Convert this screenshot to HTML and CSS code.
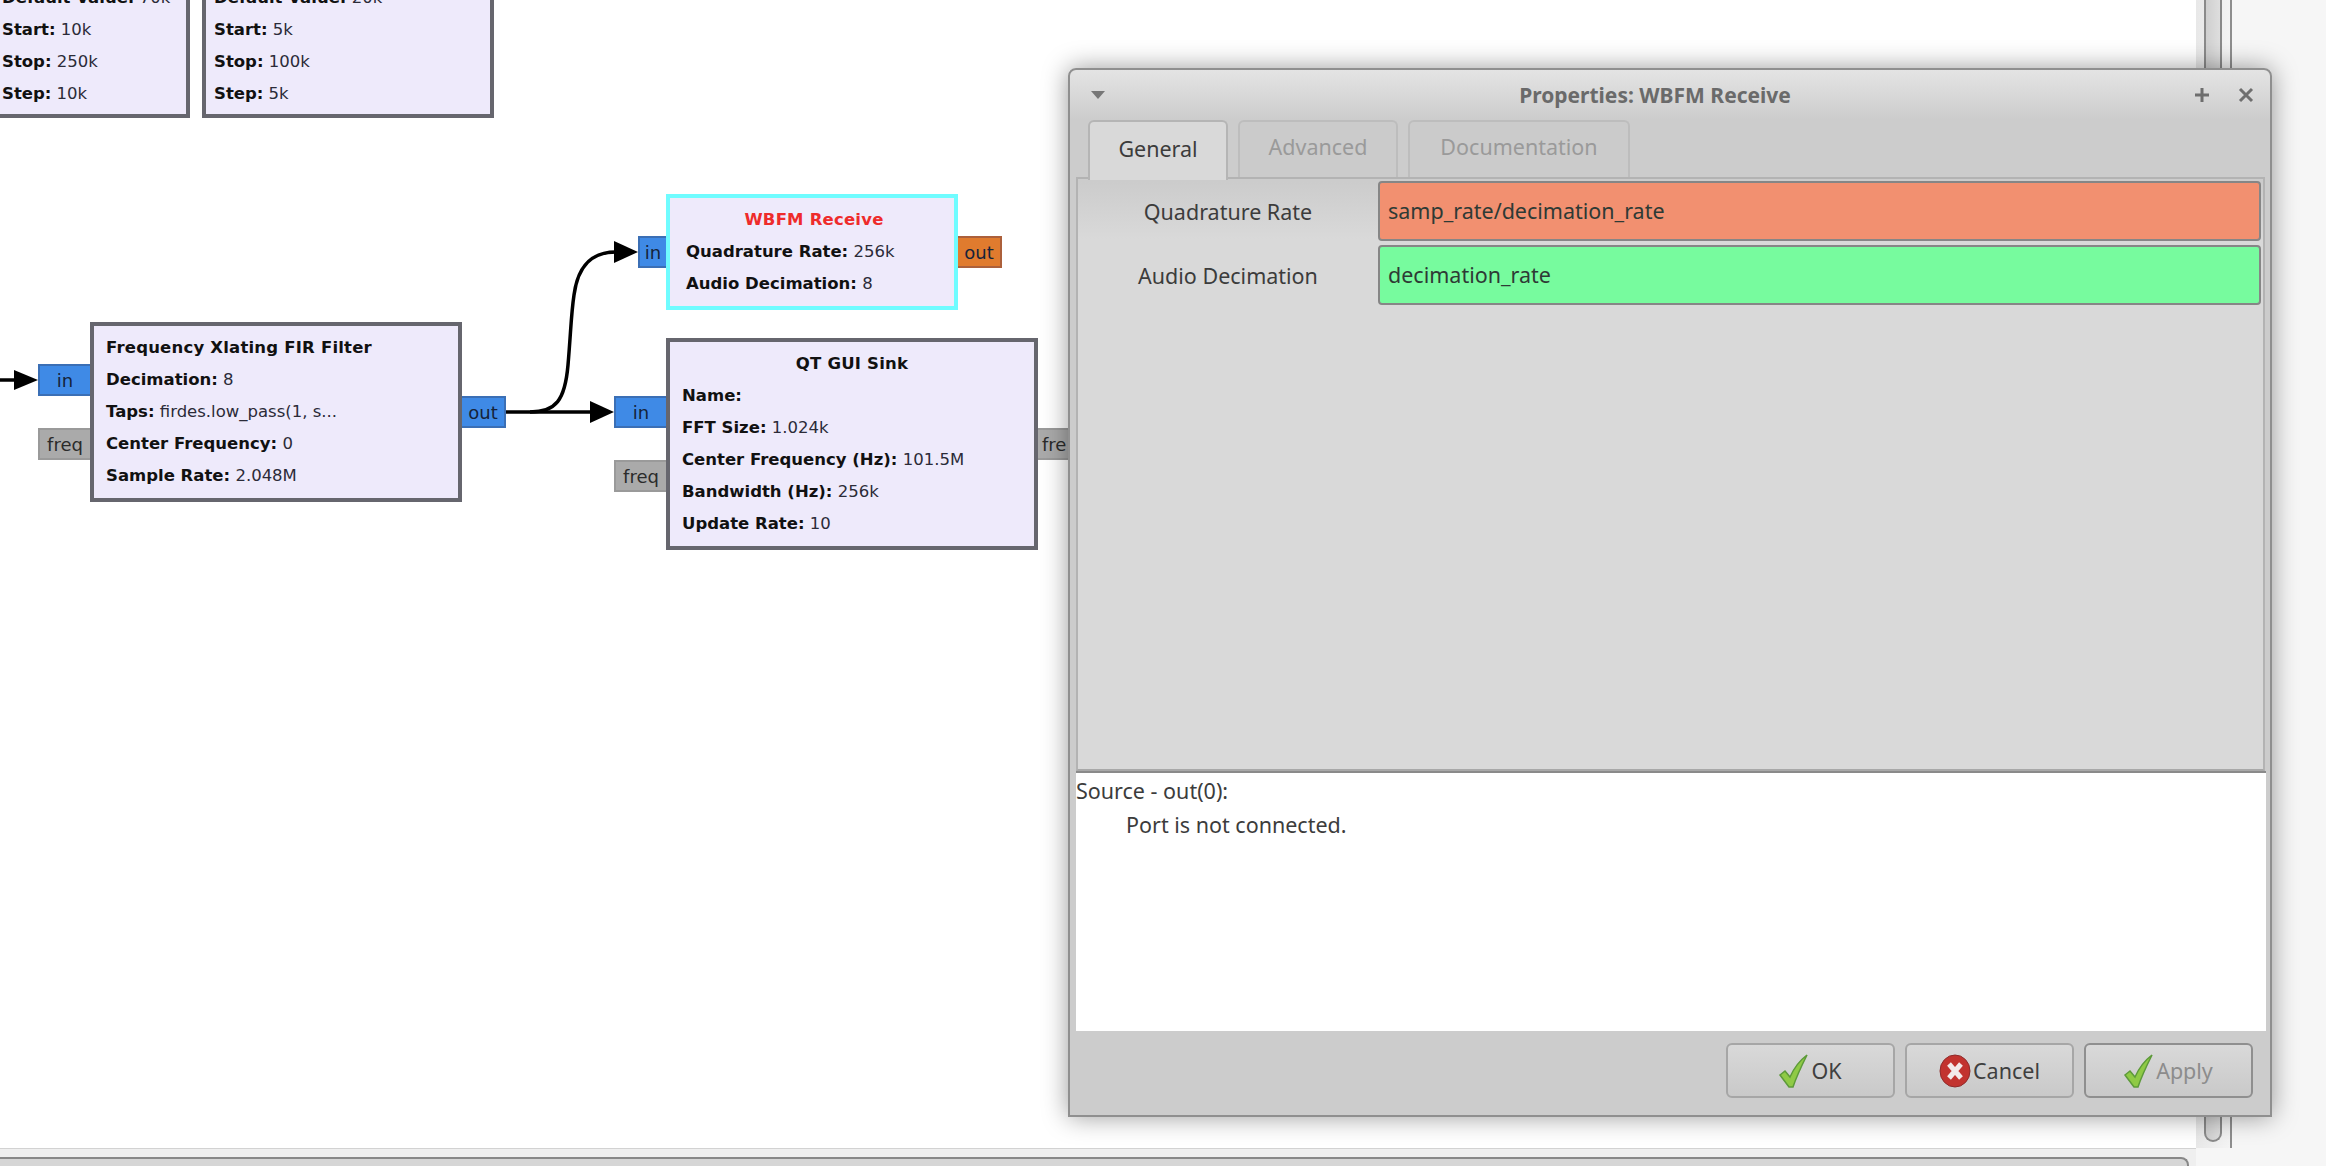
FILE: index.html
```html
<!DOCTYPE html>
<html lang="en">
<head>
  <meta charset="UTF-8">
  <meta name="viewport" content="width=device-width, initial-scale=1.0">
  <title>Properties: WBFM Receive</title>
  <link rel="stylesheet" href="styles.css">
</head>
<body>
  <div class="app">
    <div class="workspace">
      <div class="canvas">
        <div class="block block-a">
          <p class="param"><b>Default Value:</b> 70k</p>
          <p class="param"><b>Start:</b> 10k</p>
          <p class="param"><b>Stop:</b> 250k</p>
          <p class="param"><b>Step:</b> 10k</p>
        </div>
        <div class="block block-b">
          <p class="param"><b>Default Value:</b> 20k</p>
          <p class="param"><b>Start:</b> 5k</p>
          <p class="param"><b>Stop:</b> 100k</p>
          <p class="param"><b>Step:</b> 5k</p>
        </div>

        <svg class="wires" width="1040" height="560" viewBox="0 0 1040 560">
          <path class="wire" d="M0 380 H16"/>
          <path class="head" d="M14 370 L38 380 L14 390 Z"/>
          <path class="wire" d="M506 412 H592"/>
          <path class="head" d="M590 401 L614 412 L590 423 Z"/>
          <path class="wire" d="M530 412 C556 412 565 400 568 365 C571 330 571 315 574 295 C578 265 592 252 616 252"/>
          <path class="head" d="M614 241 L638 252 L614 263 Z"/>
        </svg>

        <div class="port port-in xlate-in">in</div>
        <div class="port port-msg xlate-freq">freq</div>
        <div class="block xlate">
          <p class="name">Frequency Xlating FIR Filter</p>
          <p class="param"><b>Decimation:</b> 8</p>
          <p class="param"><b>Taps:</b> firdes.low_pass(1, s...</p>
          <p class="param"><b>Center Frequency:</b> 0</p>
          <p class="param"><b>Sample Rate:</b> 2.048M</p>
        </div>
        <div class="port port-in xlate-out">out</div>

        <div class="port port-in wbfm-in">in</div>
        <div class="block wbfm">
          <p class="name name-center name-error">WBFM Receive</p>
          <p class="param"><b>Quadrature Rate:</b> 256k</p>
          <p class="param"><b>Audio Decimation:</b> 8</p>
        </div>
        <div class="port port-out wbfm-out">out</div>

        <div class="port port-in sink-in">in</div>
        <div class="port port-msg sink-freq">freq</div>
        <div class="block sink">
          <p class="name name-center">QT GUI Sink</p>
          <p class="param"><b>Name:</b></p>
          <p class="param"><b>FFT Size:</b> 1.024k</p>
          <p class="param"><b>Center Frequency (Hz):</b> 101.5M</p>
          <p class="param"><b>Bandwidth (Hz):</b> 256k</p>
          <p class="param"><b>Update Rate:</b> 10</p>
        </div>
        <div class="port port-msg sink-fre">fre</div>
      </div>
      <div class="vscroll"><div class="vthumb"></div></div>
      <div class="outside"></div>
    </div>
    <div class="hscroll"><div class="hpanel"></div></div>

    <div class="dialog">
      <div class="titlebar">
        <svg class="menu-arrow" width="14" height="8" viewBox="0 0 14 8"><path d="M0 0 H14 L7 8 Z"/></svg>
        <span class="title">Properties: WBFM Receive</span>
        <svg class="wm-btn wm-max" width="18" height="18" viewBox="0 0 18 18"><path d="M9 2 V16 M2 9 H16"/></svg>
        <svg class="wm-btn" width="18" height="18" viewBox="0 0 18 18"><path d="M3 3 L15 15 M15 3 L3 15"/></svg>
      </div>
      <div class="tabs">
        <div class="tab tab-active">General</div>
        <div class="tab tab-adv">Advanced</div>
        <div class="tab tab-doc">Documentation</div>
      </div>
      <div class="pane">
        <div class="prop-row">
          <label class="prop-label">Quadrature Rate</label>
          <div class="entry entry-bad">samp_rate/decimation_rate</div>
        </div>
        <div class="prop-row">
          <label class="prop-label">Audio Decimation</label>
          <div class="entry entry-good">decimation_rate</div>
        </div>
      </div>
      <div class="errors">
        <p>Source - out(0):</p>
        <p class="indent">Port is not connected.</p>
      </div>
      <div class="actions">
        <button class="btn">
          <svg class="icon" width="30" height="34" viewBox="0 0 30 34"><path class="check" d="M1 21 L6 17 L11 23 C15 14 20 7 28 1 C23 11 18 21 14 33 L10 33 Z"/></svg>
          OK
        </button>
        <button class="btn">
          <svg class="icon" width="32" height="34" viewBox="0 0 32 34"><ellipse class="stop" cx="16" cy="17" rx="15" ry="16"/><path class="stop-x" d="M10 10 L22 24 M22 10 L10 24"/></svg>
          Cancel
        </button>
        <button class="btn btn-dim">
          <svg class="icon" width="30" height="34" viewBox="0 0 30 34"><path class="check" d="M1 21 L6 17 L11 23 C15 14 20 7 28 1 C23 11 18 21 14 33 L10 33 Z"/></svg>
          Apply
        </button>
      </div>
    </div>
  </div>
</body>
</html>
```

FILE: styles.css
```css
* {
  box-sizing: border-box;
}
html, body {
  margin: 0;
  height: 100%;
  overflow: hidden;
}
p {
  margin: 0;
}
.app {
  position: relative;
  display: flex;
  flex-direction: column;
  width: 2326px;
  height: 1166px;
  background: #f6f6f6;
}
.workspace {
  display: flex;
  height: 1148px;
}
.canvas {
  position: relative;
  width: 2196px;
  background: #fff;
  overflow: hidden;
}
.vscroll {
  width: 36px;
  padding-left: 8px;
  border-right: 2px solid #8e8e8e;
  background: linear-gradient(to right, #e8e8e8, #f4f4f4);
}
.vthumb {
  width: 18px;
  height: 1142px;
  border: 2px solid #8a8a8a;
  border-top: none;
  border-radius: 0 0 9px 9px;
  background: linear-gradient(to right, #cfcfcf, #dedede);
}
.outside {
  flex: 1;
}
.hscroll {
  width: 2196px;
  height: 18px;
  padding-top: 8px;
  border-top: 1px solid #d2d2d2;
  background: #efefef;
}
.hpanel {
  height: 10px;
  border-top: 2px solid #888;
  border-right: 2px solid #888;
  border-radius: 0 8px 0 0;
  margin-right: 7px;
  background: #d6d6d6;
}

/* flow graph */
.block {
  position: absolute;
  padding-left: 12px;
  border: 4px solid #66666e;
  background: #eeeafb;
  font-family: "DejaVu Sans", sans-serif;
  font-size: 16.5px;
  line-height: 32px;
  color: #2b2b38;
  z-index: 2;
}
.block b {
  color: #111;
}
.name {
  font-weight: bold;
  color: #111;
  letter-spacing: 0.2px;
  padding-top: 6px;
  height: 38px;
}
.name-center {
  text-align: center;
  padding-right: 12px;
}
.name-error {
  color: #ee2b2b;
}
.block-a {
  left: -100px;
  top: -24px;
  width: 290px;
  height: 142px;
  padding: 2px 0 0 98px;
}
.block-b {
  left: 202px;
  top: -24px;
  width: 292px;
  height: 142px;
  padding: 2px 0 0 8px;
}
.xlate {
  left: 90px;
  top: 322px;
  width: 372px;
  height: 180px;
}
.wbfm {
  left: 666px;
  top: 194px;
  width: 292px;
  height: 116px;
  padding-left: 16px;
  border-color: #6ffcff;
}
.sink {
  left: 666px;
  top: 338px;
  width: 372px;
  height: 212px;
}
.port {
  position: absolute;
  height: 32px;
  border: 2px solid #3b6fb5;
  background: #3f8ae6;
  font-family: "DejaVu Sans", sans-serif;
  font-size: 18px;
  line-height: 30px;
  color: #15233a;
  text-align: center;
  overflow: hidden;
  white-space: nowrap;
}
.port-msg {
  border-color: #9a9a9a;
  background: #aaa;
  color: #2b2b2b;
}
.port-out {
  border-color: #ac603b;
  background: #e07b2e;
}
.xlate-in {
  left: 38px;
  top: 364px;
  width: 54px;
}
.xlate-freq {
  left: 38px;
  top: 428px;
  width: 54px;
}
.xlate-out {
  left: 460px;
  top: 396px;
  width: 46px;
}
.wbfm-in {
  left: 638px;
  top: 236px;
  width: 30px;
}
.wbfm-out {
  left: 956px;
  top: 236px;
  width: 46px;
}
.sink-in {
  left: 614px;
  top: 396px;
  width: 54px;
}
.sink-freq {
  left: 614px;
  top: 460px;
  width: 54px;
}
.sink-fre {
  left: 1036px;
  top: 428px;
  width: 54px;
  text-align: left;
  padding-left: 4px;
}
.wires {
  position: absolute;
  left: 0;
  top: 0;
}
.wire {
  fill: none;
  stroke: #000;
  stroke-width: 3.5;
}
.head {
  fill: #000;
}

/* properties window */
.dialog {
  position: absolute;
  left: 1068px;
  top: 68px;
  width: 1204px;
  height: 1049px;
  display: flex;
  flex-direction: column;
  padding: 0 5px 7px 6px;
  border: 2px solid #8f8f8f;
  border-radius: 8px 8px 0 0;
  background: linear-gradient(to bottom, #e4e4e4 0, #cccccc 50px);
  box-shadow: 0 0 26px rgba(0, 0, 0, 0.4);
  font-family: "Noto Sans", sans-serif;
  font-size: 21.5px;
  color: #3c3c3c;
  z-index: 5;
}
.titlebar {
  display: flex;
  align-items: center;
  height: 50px;
  flex-shrink: 0;
  padding-left: 15px;
  position: relative;
}
.menu-arrow path {
  fill: #777;
}
.title {
  flex: 1;
  text-align: center;
  font-weight: bold;
  color: #6a6a6a;
  font-size: 21px;
  padding-left: 12px;
}
.wm-btn {
  margin-right: 10px;
}
.wm-max {
  margin-right: 26px;
}
.wm-btn path {
  fill: none;
  stroke: #6e6e6e;
  stroke-width: 3;
}
.tabs {
  display: flex;
  gap: 10px;
  height: 57px;
  flex-shrink: 0;
  padding-left: 12px;
}
.tab {
  width: 160px;
  height: 57px;
  padding-top: 10px;
  text-align: center;
  border: 2px solid #bdbdbd;
  border-bottom: none;
  border-radius: 6px 6px 0 0;
  background: #cbcbcb;
  color: #9a9a9a;
}
.tab-active {
  width: 140px;
  padding-top: 12px;
  background: #d9d9d9;
  border-color: #b5b5b5;
  color: #3c3c3c;
  height: 60px;
  position: relative;
  z-index: 1;
}
.tab-doc {
  width: 222px;
}
.pane {
  height: 594px;
  flex-shrink: 0;
  padding: 2px 2px 0 0;
  border: 2px solid #b3b3b3;
  border-bottom: 2px solid #a8a8a8;
  background: #d9d9d9;
  background: linear-gradient(to bottom, #cccccc 0, #cccccc 3px, #d9d9d9 60px);
}
.prop-row {
  display: flex;
  align-items: center;
  margin-bottom: 4px;
}
.prop-label {
  width: 300px;
  text-align: center;
}
.entry {
  flex: 1;
  height: 60px;
  line-height: 56px;
  padding-left: 8px;
  border: 2px solid #868686;
  border-radius: 4px;
  color: #2e3a35;
}
.entry-bad {
  background: #f29070;
}
.entry-good {
  background: #77fb9e;
}
.errors {
  height: 260px;
  flex-shrink: 0;
  margin-right: -1px;
  border-top: 2px solid #8a8a8a;
  background: #fff;
  line-height: 34px;
  padding-top: 1px;
}
.indent {
  padding-left: 50px;
}
.actions {
  flex: 1;
  display: flex;
  justify-content: flex-end;
  align-items: flex-start;
  gap: 10px;
  padding: 12px 12px 0 0;
  background: #cccccc;
}
.btn {
  display: flex;
  align-items: center;
  justify-content: center;
  gap: 2px;
  width: 169px;
  height: 55px;
  padding: 0;
  border: 2px solid #a6a6a6;
  border-radius: 6px;
  background: linear-gradient(to bottom, #d9d9d9, #c9c9c9);
  font-family: "Noto Sans", sans-serif;
  font-size: 21.5px;
  color: #3f3f3f;
}
.btn-dim {
  color: #8c8c8c;
  border-color: #8f8f8f;
}
.check {
  fill: #8fca45;
  stroke: #5d9a3a;
  stroke-width: 1.5;
}
.stop {
  fill: #c2332f;
  stroke: #8f2a2a;
  stroke-width: 1;
}
.stop-x {
  fill: none;
  stroke: #f3eaea;
  stroke-width: 5;
}
```
